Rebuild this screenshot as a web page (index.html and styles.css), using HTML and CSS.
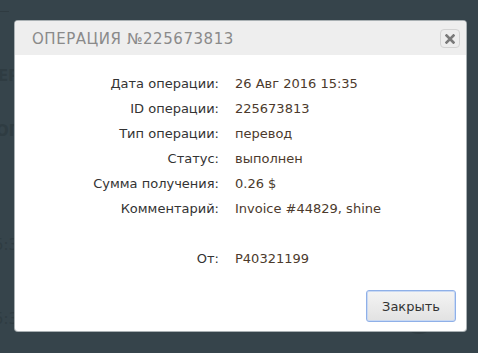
FILE: index.html
```html
<!DOCTYPE html>
<html>
<head>
<meta charset="utf-8">
<link rel="stylesheet" href="styles.css">
</head>
<body>
<div class="page">
  <div class="bg-line"></div>
  <div class="bg-text t1">ЕР</div>
  <div class="bg-text t2">ОП</div>
  <div class="bg-text t3">5:3</div>
  <div class="bg-text t4">5:3</div>
  <div class="bg-circle"></div>
</div>
<div class="dialog">
  <div class="dialog-head">
    <span class="dialog-title">Операция №225673813</span>
    <button class="close-btn" aria-label="close">
      <svg width="10" height="10" viewBox="0 0 10 10"><path d="M1.5 1.5 L8.5 8.5 M8.5 1.5 L1.5 8.5" stroke="#7a7a7a" stroke-width="2.6" stroke-linecap="square"/></svg>
    </button>
  </div>
  <div class="dialog-body">
    <div class="info">
      <div class="lbl">Дата операции:</div><div class="val">26 Авг 2016 15:35</div>
      <div class="lbl">ID операции:</div><div class="val">225673813</div>
      <div class="lbl">Тип операции:</div><div class="val">перевод</div>
      <div class="lbl">Статус:</div><div class="val">выполнен</div>
      <div class="lbl">Сумма получения:</div><div class="val">0.26 $</div>
      <div class="lbl">Комментарий:</div><div class="val">Invoice #44829, shine</div>
      <div class="lbl"></div><div class="val"></div>
      <div class="lbl">От:</div><div class="val">P40321199</div>
    </div>
  </div>
  <div class="dialog-foot">
    <button class="btn">Закрыть</button>
  </div>
</div>
</body>
</html>
```
FILE: styles.css
```css
html, body {
  margin: 0;
  padding: 0;
  width: 478px;
  height: 353px;
  overflow: hidden;
  background: #36444b;
  font-family: "DejaVu Sans", "Open Sans", sans-serif;
}
.page {
  position: relative;
  width: 478px;
  height: 353px;
}
.bg-line {
  position: absolute;
  left: 0; top: 11px;
  width: 9px; height: 1px;
  background: #2f3b41;
}
.bg-text {
  position: absolute;
  color: #2f3c42;
  font-size: 15px;
  font-weight: bold;
}
.t1 { left: -2px; top: 67px; }
.t2 { left: -4px; top: 122px; }
.t3 { left: -6px; top: 236px; font-weight: normal; }
.t4 { left: -6px; top: 310px; font-weight: normal; }
.bg-circle {
  position: absolute;
  left: 402px; top: 300px;
  width: 34px; height: 34px;
  border-radius: 50%;
  background: #303d43;
}
.dialog {
  position: absolute;
  left: 15px;
  top: 21px;
  width: 451px;
  height: 310px;
  background: #fff;
  border-radius: 3px;
  box-shadow: 0 0 0 1px #a9b0b3;
  display: flex;
  flex-direction: column;
  overflow: hidden;
}
.dialog-head {
  height: 34px;
  background: #eeeeee;
  display: flex;
  align-items: center;
  justify-content: space-between;
  padding: 0 6px 0 17px;
}
.dialog-title {
  text-transform: uppercase;
  color: #8a8a8a;
  font-size: 15px;
  letter-spacing: 0.55px;
  font-family: "DejaVu Sans", sans-serif;
  padding-top: 1px;
}
.close-btn {
  width: 20px;
  height: 19px;
  border: 1px solid #d3d3d3;
  border-radius: 4px;
  background: #ededed;
  padding: 0;
  display: flex;
  align-items: center;
  justify-content: center;
  margin-top: 1px;
}
.dialog-body {
  padding-top: 16px;
  flex: 1;
}
.info {
  display: grid;
  grid-template-columns: 204px 1fr;
  column-gap: 16px;
  grid-auto-rows: 25px;
  font-size: 13px;
  align-items: center;
}
.lbl {
  text-align: right;
  color: #333333;
  height: 25px;
  line-height: 25px;
}
.val {
  color: #4c3a2c;
  height: 25px;
  line-height: 25px;
}
.dialog-foot {
  display: flex;
  justify-content: flex-end;
  padding: 0 10px 9px 0;
}
.btn {
  width: 90px;
  height: 32px;
  border: 1px solid #8fb0e8;
  border-radius: 3px;
  background: linear-gradient(#f4f4f4, #e2e2e2);
  box-shadow: inset 0 0 0 1px #c9d9f3;
  font-family: "DejaVu Sans", sans-serif;
  font-size: 13px;
  color: #333;
  padding: 0;
}
```
